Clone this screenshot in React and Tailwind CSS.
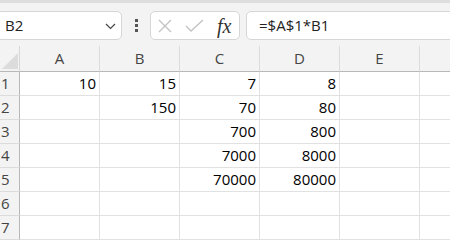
import React from 'react';

const cols = ['A', 'B', 'C', 'D', 'E'];
const rows = [
  ['10', '15', '7', '8', ''],
  ['', '150', '70', '80', ''],
  ['', '', '700', '800', ''],
  ['', '', '7000', '8000', ''],
  ['', '', '70000', '80000', ''],
  ['', '', '', '', ''],
  ['', '', '', '', ''],
];

const font = { fontFamily: '"Open Sans", "Noto Sans", Arial, sans-serif' };

const FormulaBar = () => (
  <div className="h-[46px] bg-[#f3f3f3] border-t-[3px] border-[#dedede] flex items-center">
    <div className="ml-[-4px] mt-[2px] h-[29px] w-[126px] rounded-[5px] border border-[#d6d6d6] bg-white flex items-center justify-between pl-[8px] pr-[5px]">
      <span className="text-[15px] text-[#222]">B2</span>
      <svg width="11" height="7" viewBox="0 0 11 7" className="mt-[2px]">
        <path d="M1 1l4.5 4.5L10 1" fill="none" stroke="#444" strokeWidth="1.2" />
      </svg>
    </div>
    <div className="mt-[2px] w-[28px] flex flex-col items-center gap-[2px]">
      <span className="block w-[3px] h-[3px] bg-[#555]" />
      <span className="block w-[3px] h-[3px] bg-[#555]" />
      <span className="block w-[3px] h-[3px] bg-[#555]" />
    </div>
    <div className="mt-[2px] h-[29px] w-[90px] rounded-[5px] border border-[#d6d6d6] bg-white flex items-center">
      <svg width="16" height="16" viewBox="0 0 16 16" className="ml-[6px]">
        <path d="M2 2l12 12M14 2L2 14" stroke="#c2c2c2" strokeWidth="1.3" fill="none" />
      </svg>
      <svg width="19" height="14" viewBox="0 0 19 14" className="ml-[12px]">
        <path d="M1 7l5 5L18 1" stroke="#c2c2c2" strokeWidth="1.3" fill="none" />
      </svg>
      <span
        className="ml-[13px] text-[20px] italic text-[#333] leading-none"
        style={{ fontFamily: '"Liberation Serif", "DejaVu Serif", serif' }}
      >
        fx
      </span>
    </div>
    <div className="mt-[2px] ml-[6px] h-[29px] flex-1 mr-[-10px] rounded-[5px] border border-[#d6d6d6] bg-white flex items-center pl-[12px]">
      <span className="text-[15px] text-[#222]">=$A$1*B1</span>
    </div>
  </div>
);

const App = () => (
  <div className="w-[450px] h-[243px] overflow-hidden bg-white" style={font}>
    <FormulaBar />
    <div className="grid grid-cols-[20px_repeat(5,80px)_1fr]">
      <div className="h-[26px] bg-[#f3f3f3] border-b border-[#b8b8b8] border-r border-r-[#d8d8d8] relative">
        <svg width="16" height="16" viewBox="0 0 16 16" className="absolute right-[1px] bottom-[2px]">
          <path d="M16 0V16H0Z" fill="#dcdcdc" />
        </svg>
      </div>
      {cols.map((c) => (
        <div
          key={c}
          className="h-[26px] bg-[#f3f3f3] border-b border-[#b8b8b8] border-r border-r-[#dcdcdc] flex items-center justify-center text-[15px] text-[#444]"
        >
          {c}
        </div>
      ))}
      <div className="h-[26px] bg-[#f3f3f3] border-b border-[#b8b8b8]" />
      {rows.map((r, i) => (
        <React.Fragment key={i}>
          <div className="h-[24px] bg-[#f3f3f3] border-b border-[#dcdcdc] border-r border-r-[#b8b8b8] flex items-center pl-[1px] text-[15px] text-[#444]">
            {i + 1}
          </div>
          {r.map((v, j) => (
            <div
              key={j}
              className="h-[24px] border-b border-r border-[#e1e1e1] flex items-center justify-end pr-[3px] text-[15px] text-black"
            >
              {v}
            </div>
          ))}
          <div className="h-[24px] border-b border-[#e1e1e1]" />
        </React.Fragment>
      ))}
    </div>
  </div>
);

export default App;
